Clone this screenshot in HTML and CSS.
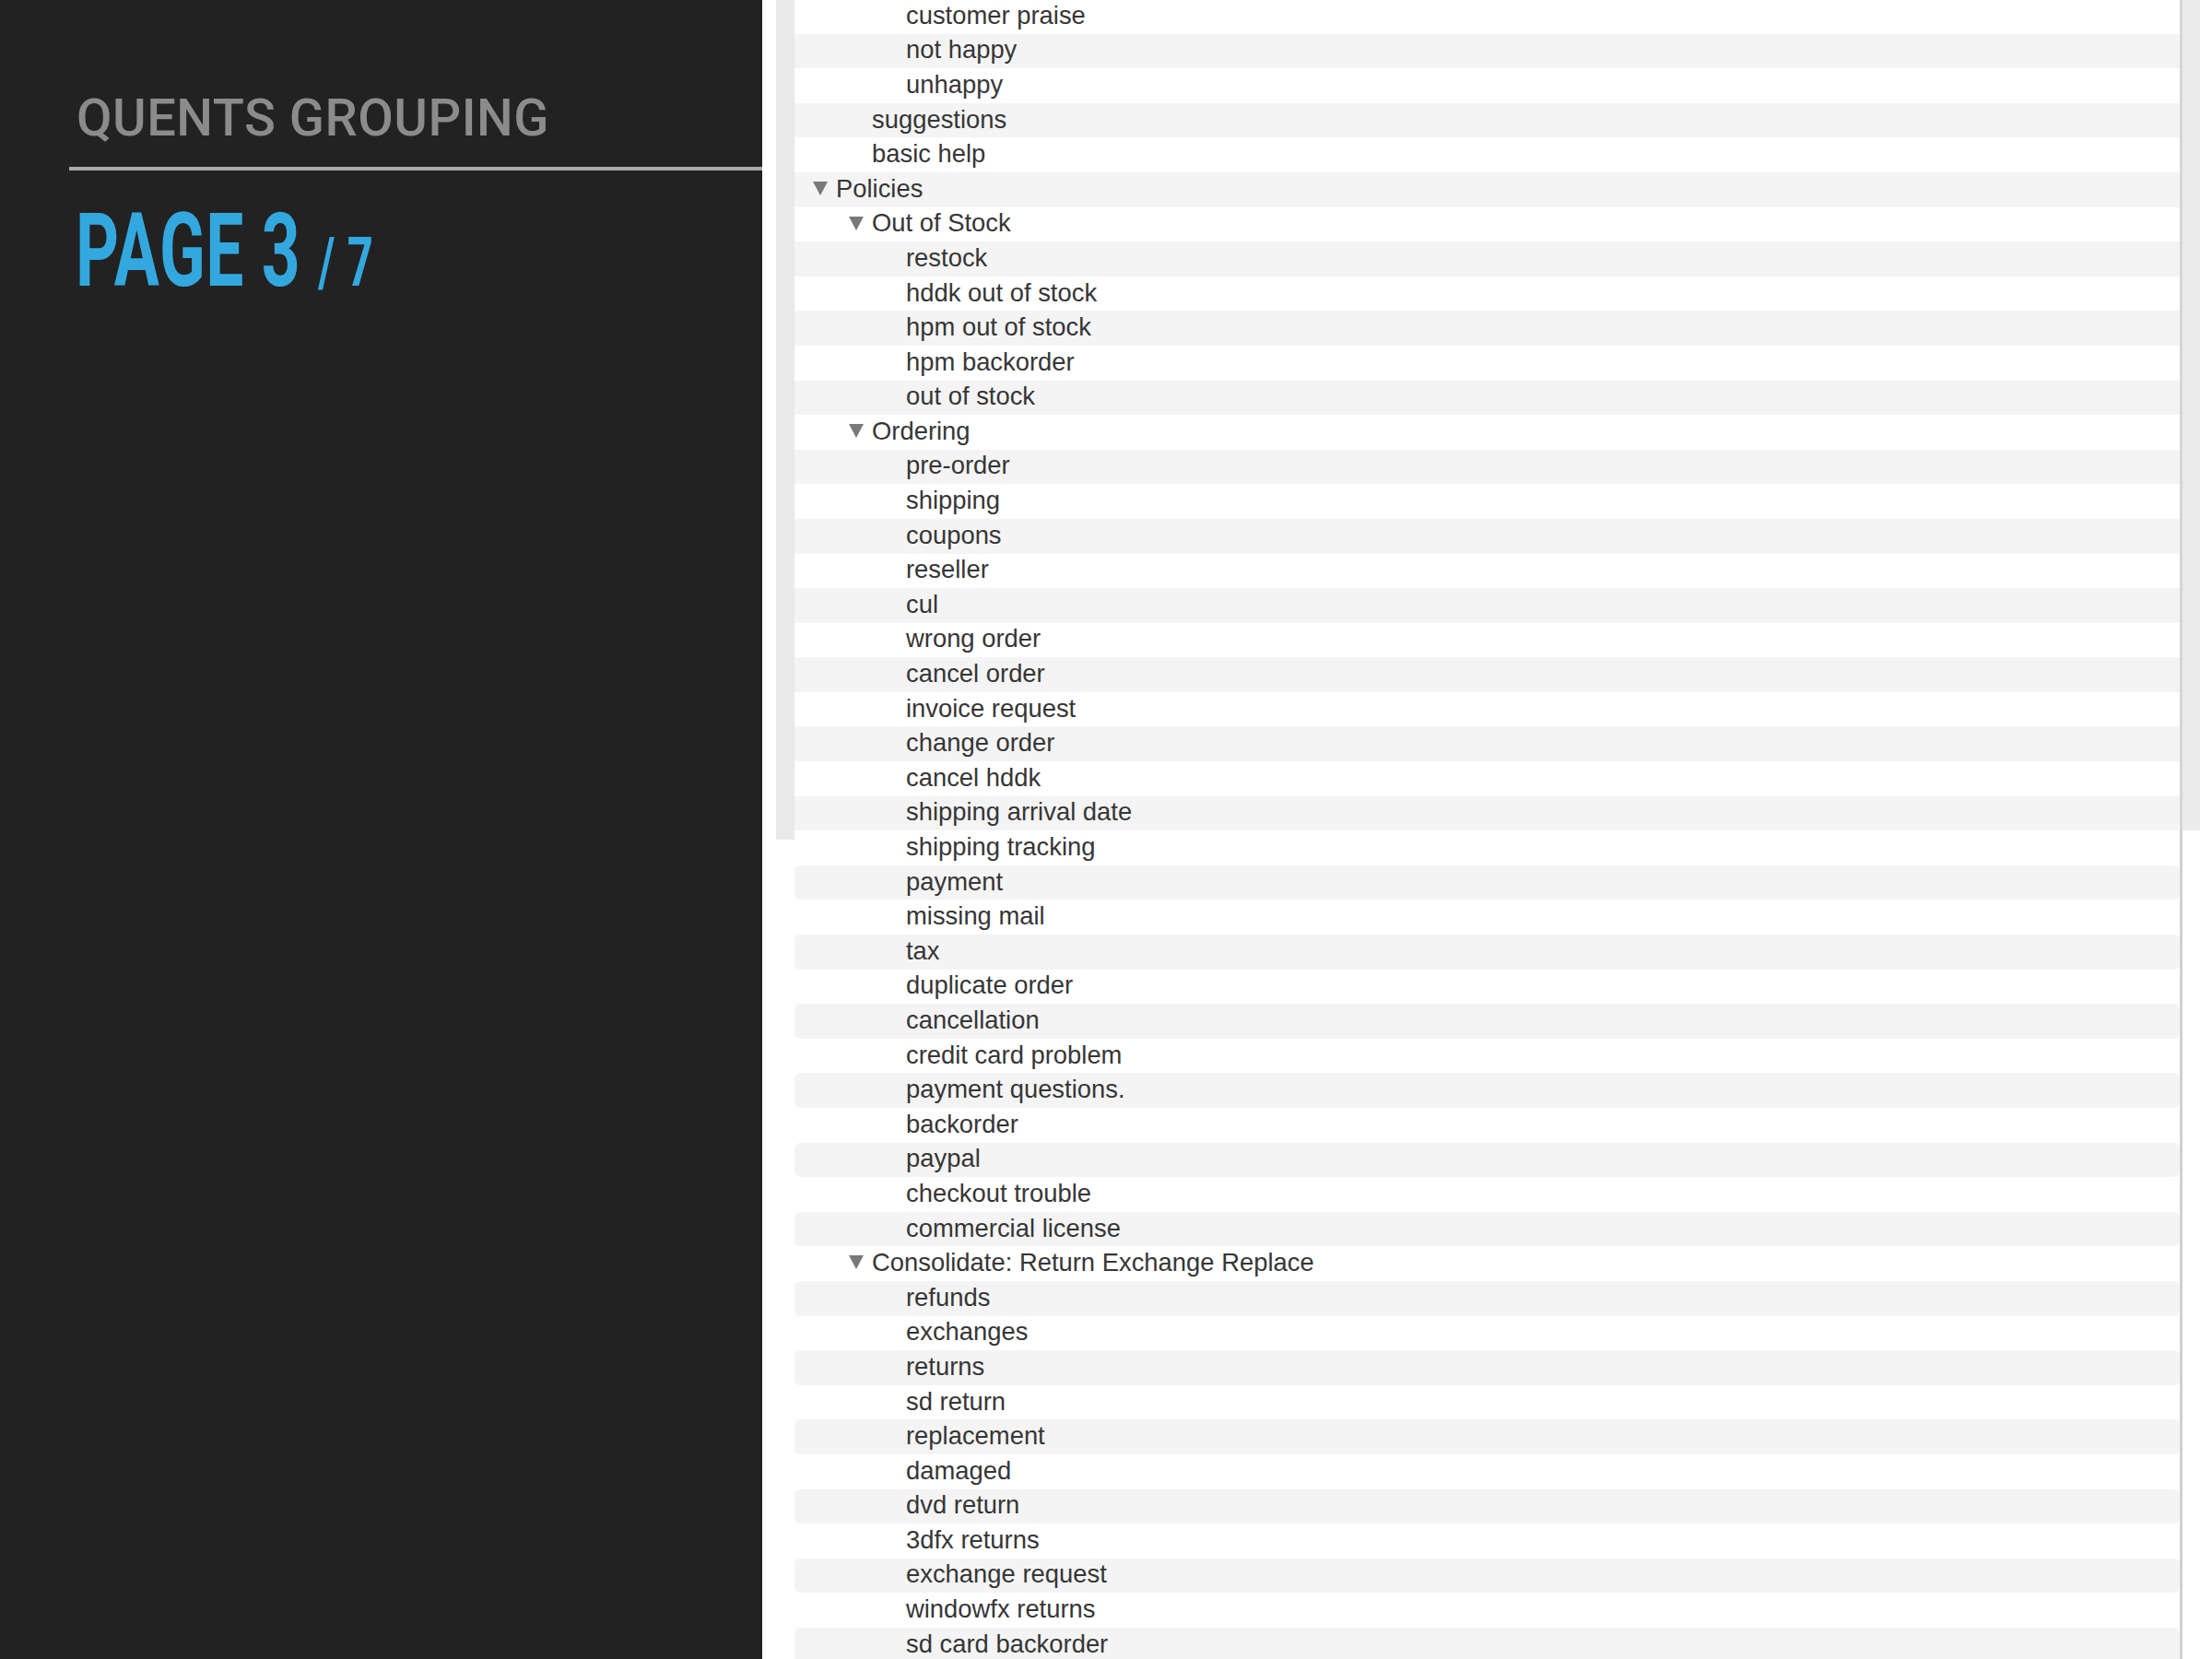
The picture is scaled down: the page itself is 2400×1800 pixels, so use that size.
FILE: index.html
```html
<!DOCTYPE html>
<html lang="en">
<head>
<meta charset="utf-8">
<title>Quents Grouping</title>
<link rel="stylesheet" href="styles.css">
</head>
<body>
<div class="slide">
  <aside class="sidebar">
    <div class="kicker">QUENTS GROUPING</div>
    <div class="rule"></div>
    <div class="page"><span class="page-inner">PAGE 3 <span class="of">/ 7</span></span></div>
  </aside>
  <main class="main">
    <div class="pane upper">
      <div class="list">
        <div class="row l2">customer praise</div>
        <div class="row l2">not happy</div>
        <div class="row l2">unhappy</div>
        <div class="row l1">suggestions</div>
        <div class="row l1">basic help</div>
        <div class="row l0"><svg class="tri" viewBox="0 0 16 15"><polygon points="0,0 16,0 8,15"/></svg>Policies</div>
        <div class="row l1"><svg class="tri" viewBox="0 0 16 15"><polygon points="0,0 16,0 8,15"/></svg>Out of Stock</div>
        <div class="row l2">restock</div>
        <div class="row l2">hddk out of stock</div>
        <div class="row l2">hpm out of stock</div>
        <div class="row l2">hpm backorder</div>
        <div class="row l2">out of stock</div>
        <div class="row l1"><svg class="tri" viewBox="0 0 16 15"><polygon points="0,0 16,0 8,15"/></svg>Ordering</div>
        <div class="row l2">pre-order</div>
        <div class="row l2">shipping</div>
        <div class="row l2">coupons</div>
        <div class="row l2">reseller</div>
        <div class="row l2">cul</div>
        <div class="row l2">wrong order</div>
        <div class="row l2">cancel order</div>
        <div class="row l2">invoice request</div>
        <div class="row l2">change order</div>
        <div class="row l2">cancel hddk</div>
        <div class="row l2">shipping arrival date</div>
      </div>
      <div class="scrollbar"></div>
    </div>
    <div class="pane lower">
      <div class="list">
        <div class="row l2">shipping tracking</div>
        <div class="row l2">payment</div>
        <div class="row l2">missing mail</div>
        <div class="row l2">tax</div>
        <div class="row l2">duplicate order</div>
        <div class="row l2">cancellation</div>
        <div class="row l2">credit card problem</div>
        <div class="row l2">payment questions.</div>
        <div class="row l2">backorder</div>
        <div class="row l2">paypal</div>
        <div class="row l2">checkout trouble</div>
        <div class="row l2">commercial license</div>
        <div class="row l1"><svg class="tri" viewBox="0 0 16 15"><polygon points="0,0 16,0 8,15"/></svg>Consolidate: Return Exchange Replace</div>
        <div class="row l2">refunds</div>
        <div class="row l2">exchanges</div>
        <div class="row l2">returns</div>
        <div class="row l2">sd return</div>
        <div class="row l2">replacement</div>
        <div class="row l2">damaged</div>
        <div class="row l2">dvd return</div>
        <div class="row l2">3dfx returns</div>
        <div class="row l2">exchange request</div>
        <div class="row l2">windowfx returns</div>
        <div class="row l2">sd card backorder</div>
      </div>
    </div>
  </main>
</div>
</body>
</html>
```
FILE: styles.css
```css
html, body {
  margin: 0;
  padding: 0;
  background: #ffffff;
}
body {
  width: 2400px;
  height: 1800px;
  overflow: hidden;
}
.slide {
  display: flex;
  width: 2400px;
  height: 1800px;
}
.sidebar {
  width: 827px;
  flex: none;
  background: #222222;
  padding-top: 100px;
  box-sizing: border-box;
}
.kicker {
  margin-left: 83px;
  font-family: Roboto, "Liberation Sans", sans-serif;
  font-weight: 500;
  font-size: 56px;
  line-height: 56px;
  letter-spacing: 0.5px;
  color: #8b8b8b;
  white-space: nowrap;
}
.rule {
  margin-top: 25px;
  margin-left: 75px;
  height: 4px;
  background: #a9a9a9;
}
.page {
  margin-top: 31px;
  margin-left: 82px;
  font-family: Roboto, "Liberation Sans", sans-serif;
  font-weight: 700;
  font-size: 112px;
  line-height: 112px;
  color: #33a8df;
  white-space: nowrap;
}
.page-inner {
  display: inline-block;
  transform: scaleX(0.652);
  transform-origin: left center;
  letter-spacing: 1px;
}
.of {
  font-size: 75px;
}
.main {
  flex: 1;
  background: #ffffff;
  padding-left: 15px;
  margin-top: -1px;
}
.pane {
  display: flex;
}
.upper {
  border-left: 20px solid #e9e9e9;
  padding-bottom: 10px;
  margin-bottom: -10px;
  width: 1545px;
  box-sizing: border-box;
}
.upper .list {
  width: 1503px;
}
.scrollbar {
  width: 19px;
  border-left: 3px solid #d5d5d5;
  background: #ececec;
}
.lower {
  padding-left: 20px;
  position: relative;
}
.lower .list {
  width: 1503px;
  border-right: 3px solid #d0d0d0;
}
.list {
  display: flex;
  flex-direction: column;
}
.row {
  height: 37.6px;
  box-sizing: border-box;
  padding-bottom: 2.5px;
  display: flex;
  align-items: center;
  font-family: "Liberation Sans", Arial, sans-serif;
  font-size: 27.4px;
  line-height: 33.6px;
  color: #363636;
  white-space: nowrap;
}
.row:nth-child(even) {
  background: #f4f4f4;
}
.lower .row:nth-child(even) {
  border-radius: 6px;
}
.l0 { padding-left: 45px; }
.l1 { padding-left: 84px; }
.l2 { padding-left: 121px; }
.tri {
  width: 16px;
  height: 15px;
  margin-left: -25px;
  margin-right: 9px;
  fill: #797979;
  flex: none;
}
```
